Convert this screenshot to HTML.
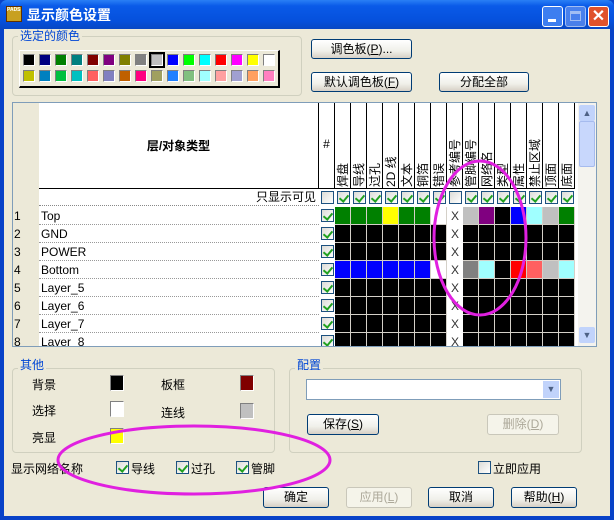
<!DOCTYPE html>
<html><head><meta charset="utf-8"><style>
*{margin:0;padding:0;box-sizing:border-box}
body{width:614px;height:520px;overflow:hidden;background:#0842c8;font-family:"Liberation Sans","Noto Sans CJK SC",sans-serif;font-size:12px;color:#000;position:relative}
.a{position:absolute}
#title{left:0;top:0;width:614px;height:30px;background:linear-gradient(#2a7ff5,#0a5ae8 20%,#0550dc 70%,#0846c0);border-radius:7px 7px 0 0}
#body{left:4px;top:29px;width:606px;height:487px;background:#ece9d8}
.grp{border:1px solid #d0d0bf;border-radius:4px}
.gl{background:#ece9d8;color:#0046d5;padding:0 2px;font-size:12px;line-height:13px}
.btn{border:1px solid #003c74;border-radius:3px;background:linear-gradient(#fff,#f0f0ea 60%,#d6d0c5);text-align:center;font-size:12px;line-height:18px}
.dis{border-color:#c9c7ba;color:#aca899;background:#f5f4ea}
.cb{width:13px;height:13px;border:1px solid #1c5180;background:linear-gradient(135deg,#dcdcd7,#fff);}
.ck::after{content:"";position:absolute;left:3px;top:1px;width:4px;height:7px;border:solid #21a121;border-width:0 2px 2px 0;transform:rotate(40deg)}
.sw{width:12px;height:12px;border:1px solid #808080;border-right-color:#fff;border-bottom-color:#fff}
.vt{transform-origin:0 0;transform:rotate(-90deg);white-space:nowrap;font-size:12px;line-height:14px}
</style></head><body>
<div id="title" class="a"></div>
<div class="a" style="left:6px;top:6px;width:16px;height:16px;background:#c8a020;border:1px solid #603000;font-size:5px;color:#fff;line-height:7px;font-weight:bold">PADS</div>
<div class="a" style="left:27px;top:6px;color:#fff;font-size:14px;font-weight:bold;line-height:18px">显示颜色设置</div>
<div class="a" style="left:542px;top:6px;width:21px;height:21px;border:1px solid #fff;border-radius:3px;background:#3d7ef0"><div class="a" style="left:5px;top:12px;width:8px;height:3px;background:#fff"></div></div>
<div class="a" style="left:565px;top:6px;width:21px;height:21px;border:1px solid #c8d8f8;border-radius:3px;background:#5a8cf0;opacity:.8"><div class="a" style="left:4px;top:4px;width:11px;height:10px;border:1px solid #c8d8f8;border-top-width:3px"></div></div>
<div class="a" style="left:588px;top:6px;width:21px;height:21px;border:1px solid #fff;border-radius:3px;background:#e0522c;color:#fff;font-weight:bold;font-size:16px;text-align:center;line-height:19px">✕</div>
<div id="body" class="a"></div>

<div class="a grp" style="left:12px;top:36px;width:290px;height:60px"></div>
<div class="a gl" style="left:18px;top:30px">选定的颜色</div>
<div class="a" style="left:19px;top:50px;width:261px;height:38px;background:#ece9d8;border:1px solid #fff;border-right:2px solid #000;border-bottom:2px solid #000" id="pal"></div>

<div class="a btn" style="left:311px;top:39px;width:101px;height:20px">调色板(<u>P</u>)...</div>
<div class="a btn" style="left:311px;top:72px;width:101px;height:20px">默认调色板(<u>F</u>)</div>
<div class="a btn" style="left:439px;top:72px;width:90px;height:20px">分配全部</div>

<div class="a" style="left:12px;top:102px;width:585px;height:245px;border:1px solid #7f9db9;background:#fff;overflow:hidden" id="tbl">
 <div class="a" style="left:0;top:0;width:26px;height:245px;background:#ece9d8"></div>
 <div class="a" style="left:26px;top:0;width:280px;height:86px;border-right:1px solid #000;border-bottom:1px solid #000;text-align:center;line-height:86px;font-weight:bold">层/对象类型</div>
 <div class="a" style="left:26px;top:86px;width:280px;height:17px;text-align:right;padding-right:3px;line-height:17px;border-bottom:1px dotted #888">只显示可见</div>
 <div class="a" style="left:565px;top:0;width:18px;height:243px;background:#f4f3ee"><div class="a" style="left:1px;top:2px;width:16px;height:16px;background:#c1d3fb;border-radius:2px;color:#4d6185;text-align:center;font-size:9px;line-height:16px">▲</div><div class="a" style="left:1px;top:18px;width:16px;height:46px;background:#c8d7fc;border:1px solid #a6bbee;border-radius:2px"></div><div class="a" style="left:1px;top:224px;width:16px;height:16px;background:#c1d3fb;border-radius:2px;color:#4d6185;text-align:center;font-size:9px;line-height:16px">▼</div></div>
</div>

<div class="a grp" style="left:12px;top:368px;width:263px;height:85px"></div>
<div class="a gl" style="left:18px;top:359px">其他</div>
<div class="a" style="left:32px;top:376px">背景</div><div class="a sw" style="left:110px;top:375px;width:14px;height:16px;background:#000"></div>
<div class="a" style="left:32px;top:402px">选择</div><div class="a sw" style="left:110px;top:401px;width:14px;height:16px;background:#fff"></div>
<div class="a" style="left:32px;top:429px">亮显</div><div class="a sw" style="left:110px;top:428px;width:14px;height:16px;background:#ff0"></div>
<div class="a" style="left:161px;top:376px">板框</div><div class="a sw" style="left:240px;top:375px;width:14px;height:16px;background:#800000"></div>
<div class="a" style="left:161px;top:404px">连线</div><div class="a sw" style="left:240px;top:403px;width:14px;height:16px;background:#c0c0c0"></div>

<div class="a grp" style="left:289px;top:368px;width:293px;height:85px"></div>
<div class="a gl" style="left:295px;top:359px">配置</div>
<div class="a" style="left:306px;top:379px;width:255px;height:21px;border:1px solid #7f9db9;background:#fff"><div class="a" style="right:1px;top:1px;width:16px;height:17px;background:#c1d3fb;color:#4d6185;font-size:9px;text-align:center;line-height:17px">▼</div></div>
<div class="a btn" style="left:307px;top:414px;width:72px;height:21px;line-height:19px">保存(<u>S</u>)</div>
<div class="a btn dis" style="left:487px;top:414px;width:72px;height:21px;line-height:19px">删除(<u>D</u>)</div>

<div class="a" style="left:11px;top:460px">显示网络名称</div>
<div class="a cb ck" style="left:116px;top:461px"></div><div class="a" style="left:131px;top:460px">导线</div>
<div class="a cb ck" style="left:176px;top:461px"></div><div class="a" style="left:191px;top:460px">过孔</div>
<div class="a cb ck" style="left:236px;top:461px"></div><div class="a" style="left:251px;top:460px">管脚</div>
<div class="a cb" style="left:478px;top:461px"></div><div class="a" style="left:493px;top:460px">立即应用</div>

<div class="a btn" style="left:263px;top:487px;width:66px;height:21px;line-height:19px">确定</div>
<div class="a btn dis" style="left:346px;top:487px;width:66px;height:21px;line-height:19px">应用(<u>L</u>)</div>
<div class="a btn" style="left:428px;top:487px;width:66px;height:21px;line-height:19px">取消</div>
<div class="a btn" style="left:511px;top:487px;width:66px;height:21px;line-height:19px">帮助(<u>H</u>)</div>

<svg class="a" style="left:0;top:0" width="614" height="520"><g fill="none" stroke="#e020e0" stroke-width="3"><ellipse cx="480" cy="238" rx="46" ry="77"/><ellipse cx="194" cy="460" rx="136" ry="34"/></g></svg>

<script>
var p=document.getElementById('pal');
var c1=['#000','#000080','#008000','#008080','#800000','#800080','#808000','#808080','#c0c0c0','#0000ff','#00ff00','#00ffff','#ff0000','#ff00ff','#ffff00','#fff'];
var c2=['#c0c000','#0080c0','#00c040','#00c0c0','#ff6060','#8080c0','#c06000','#ff0080','#a0a060','#2080ff','#80c080','#a0ffff','#ffa0a0','#a0a0d0','#ffa060','#ff80c0'];
var h='';
for(var i=0;i<16;i++){h+='<div class="a sw" style="left:'+(3+i*16)+'px;top:3px;background:'+c1[i]+'"></div><div class="a sw" style="left:'+(3+i*16)+'px;top:19px;background:'+c2[i]+'"></div>';}
h+='<div class="a" style="left:129px;top:1px;width:16px;height:16px;border:2px solid #000"></div>';
p.innerHTML=h;
var t=document.getElementById('tbl');
var labs=['焊盘','导线','过孔','2D 线','文本','铜箔','错误','参考编号','管脚编号','网络名','类型','属性','禁止区域','顶面','底面'];
var names=['Top','GND','POWER','Bottom','Layer_5','Layer_6','Layer_7','Layer_8'];
var K='#000',G='#008000',B='#0000ff',W='#fff',S='#c0c0c0';
var r1=[G,G,G,'#ffff00',G,G,W,'x',S,'#800080',K,B,'#a0ffff',S,G];
var r4=[B,B,B,B,B,B,W,'x','#808080','#a0ffff',K,'#ff0000','#ff6060',S,'#a0ffff'];
var h='';
var x0=306;
h+='<div class="a" style="left:'+x0+'px;top:0;width:16px;height:86px;border-right:1px solid #000;border-bottom:1px solid #000;text-align:center;padding-top:34px">#</div>';
for(var j=0;j<15;j++){var x=x0+16+j*16;
 h+='<div class="a" style="left:'+x+'px;top:0;width:16px;height:86px;border-right:1px solid #000;border-bottom:1px solid #000"></div>';
 h+='<div class="a vt" style="left:'+(x+1)+'px;top:84px">'+labs[j]+'</div>';}
h+='<div class="a cb" style="left:'+(x0+2)+'px;top:88px"></div>';
for(var j=0;j<15;j++){h+='<div class="a cb'+(j==7?'':' ck')+'" style="left:'+(x0+18+j*16)+'px;top:88px"></div>';}
for(var r=0;r<8;r++){var y=104+r*18;
 h+='<div class="a" style="left:0;top:'+y+'px;width:26px;height:18px;padding-left:1px;line-height:18px">'+(r+1)+'</div>';
 h+='<div class="a" style="left:26px;top:'+y+'px;width:280px;height:18px;padding-left:2px;line-height:18px;border-bottom:1px dotted #999">'+names[r]+'</div>';
 h+='<div class="a cb ck" style="left:'+(x0+2)+'px;top:'+(y+2)+'px"></div>';
 for(var j=0;j<15;j++){var c=r==0?r1[j]:r==3?r4[j]:(j==7?'x':K);var x=x0+16+j*16;
  if(c=='x')h+='<div class="a" style="left:'+x+'px;top:'+y+'px;width:16px;height:18px;text-align:center;line-height:18px;color:#333">X</div>';
  else h+='<div class="a" style="left:'+x+'px;top:'+y+'px;width:16px;height:18px;background:'+c+';border-right:1px solid #d4d0c8;border-bottom:1px solid #d4d0c8"></div>';}
}
t.insertAdjacentHTML('beforeend',h);
</script>
</body></html>
